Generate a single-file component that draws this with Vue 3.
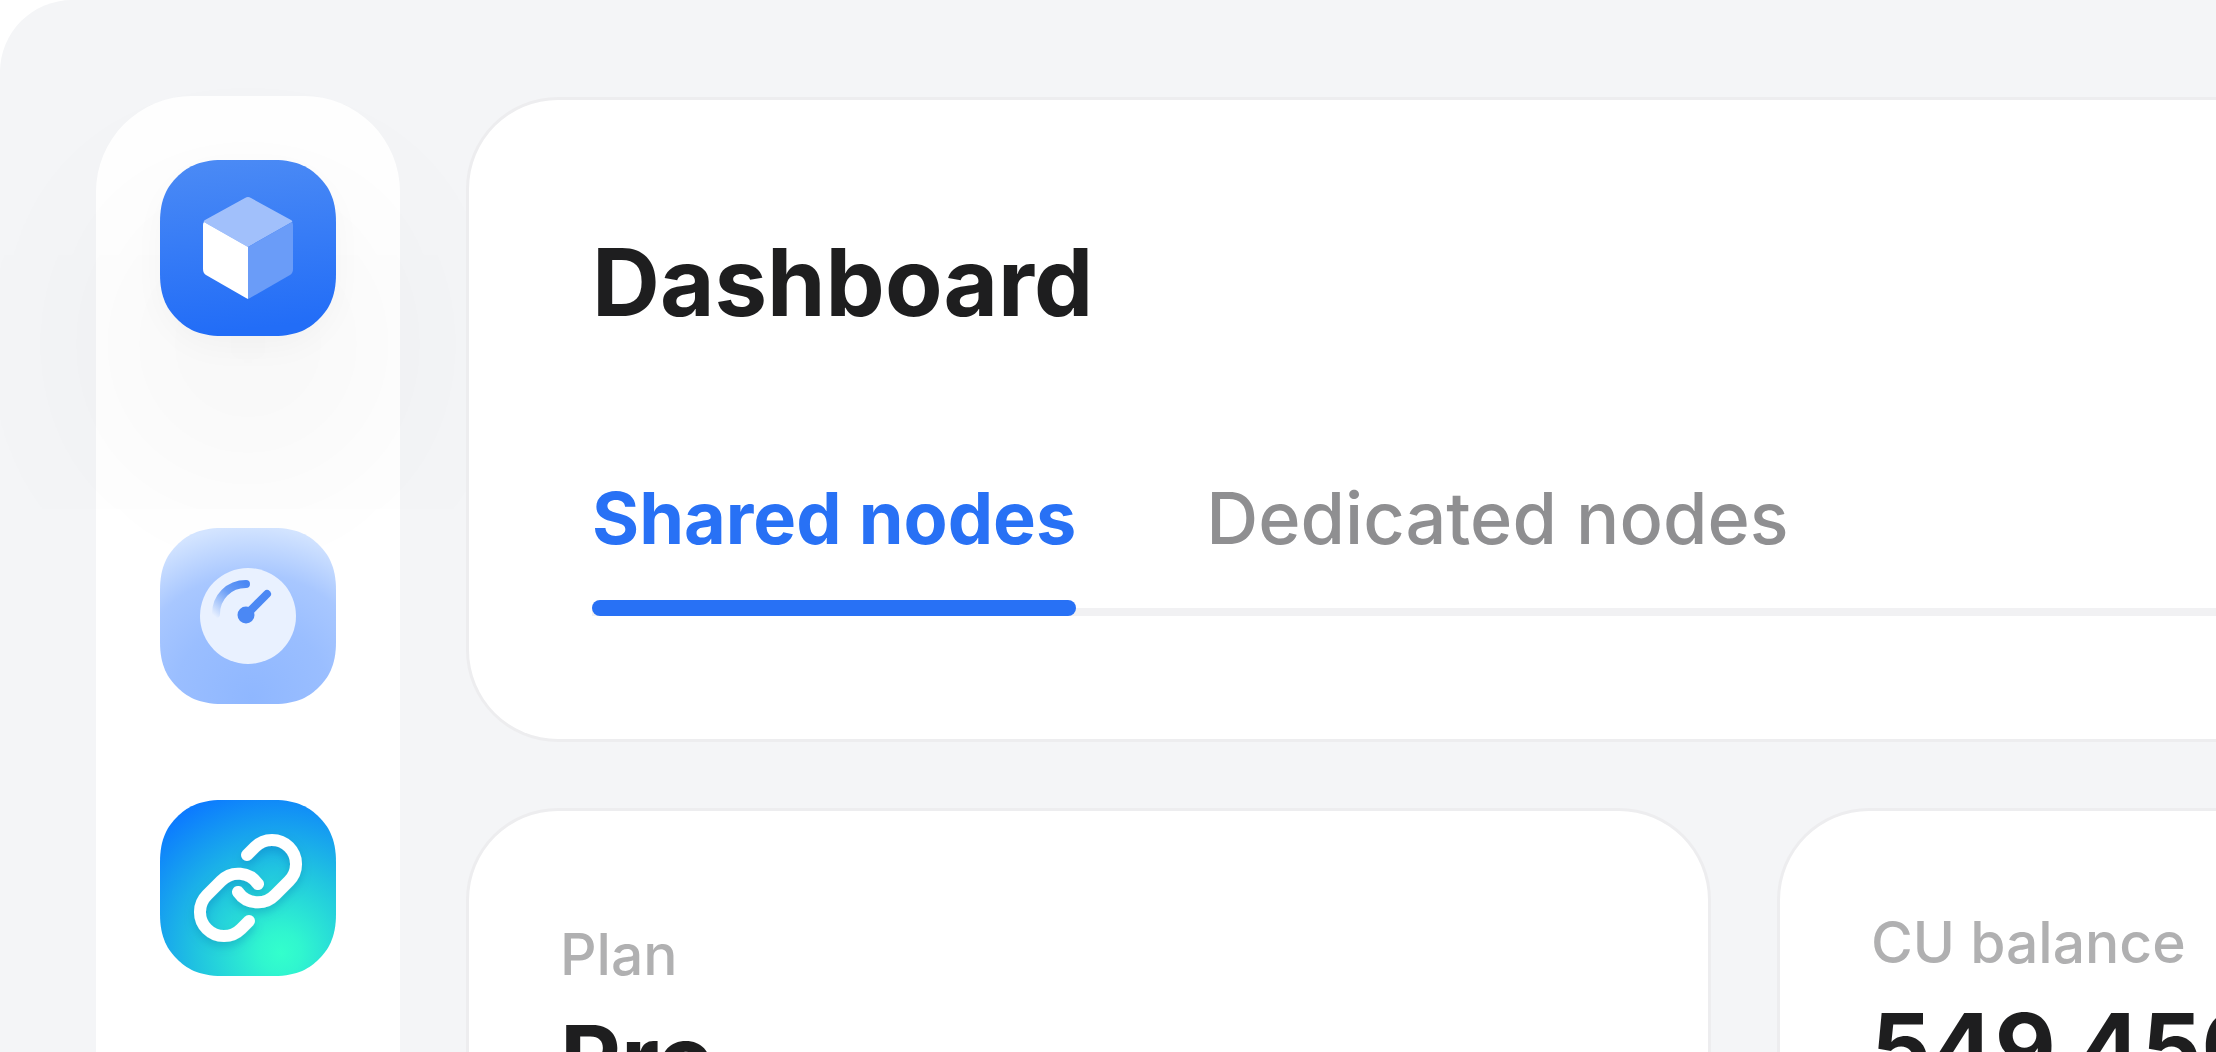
<script setup>
const tile = 'M62 0H114C138 0 150 8 159 17S176 38 176 62V114C176 138 168 150 159 159S138 176 114 176H62C38 176 26 168 17 159S0 138 0 114V62C0 38 8 26 17 17S38 0 62 0Z'
const tabs = [
  { label: 'Shared nodes', active: true },
  { label: 'Dedicated nodes', active: false },
]
const stats = [
  { label: 'Plan', value: 'Pro', kind: 'plan' },
  { label: 'CU balance', value: '549 450', kind: 'balance' },
]
</script>

<template>
  <div class="app">
    <nav class="sidebar" aria-label="Main">
      <a class="logo" href="#" aria-label="Home">
        <svg viewBox="0 0 176 176">
          <defs>
            <linearGradient id="logoFill" x1="0" y1="0" x2="0.1" y2="1">
              <stop offset="0" stop-color="#4c8bf5" />
              <stop offset="1" stop-color="#226df7" />
            </linearGradient>
          </defs>
          <path :d="tile" fill="url(#logoFill)" />
          <path d="M85 38Q88 36 91 38L131 60Q133 61 132 62L88 87 44 62Q43 61 45 60Z" fill="#a1c0fb" />
          <path d="M132 62Q133 63 133 65V109Q133 113 130 115L90 138 88 139V87Z" fill="#6a9cf8" />
          <path d="M44 62L88 87V139L86 138 46 115Q43 113 43 109V65Q43 63 44 62Z" fill="#fff" />
        </svg>
      </a>
      <a href="#" aria-label="Dashboard">
        <svg viewBox="0 0 176 176">
          <defs>
            <radialGradient id="gaugeFill" gradientUnits="userSpaceOnUse" cx="92" cy="170" r="172">
              <stop offset="0" stop-color="#8fb7ff" />
              <stop offset="0.45" stop-color="#9abeff" />
              <stop offset="0.72" stop-color="#a8c7ff" />
              <stop offset="1" stop-color="#d3e4ff" />
            </radialGradient>
            <linearGradient id="gaugeArc" gradientUnits="userSpaceOnUse" x1="84" y1="54" x2="54" y2="88">
              <stop offset="0" stop-color="#4b88f4" />
              <stop offset="0.4" stop-color="#6b9ef6" />
              <stop offset="1" stop-color="#e9f1ff" />
            </linearGradient>
          </defs>
          <path :d="tile" fill="url(#gaugeFill)" />
          <circle cx="88" cy="88" r="48" fill="#e9f1ff" />
          <path d="M56 86C56 69 69 56 86 56" fill="none" stroke="url(#gaugeArc)" stroke-width="8" stroke-linecap="round" />
          <path d="M86 87L107 66" stroke="#4b88f4" stroke-width="8" stroke-linecap="round" />
          <circle cx="86" cy="87" r="8.5" fill="#4b88f4" />
        </svg>
      </a>
      <a href="#" aria-label="Endpoints">
        <svg viewBox="0 0 176 176">
          <defs>
            <radialGradient id="linkFill" gradientUnits="userSpaceOnUse" cx="121" cy="153" r="170">
              <stop offset="0" stop-color="#33ffcc" />
              <stop offset="0.12" stop-color="#30f6cf" />
              <stop offset="0.5" stop-color="#20c4e0" />
              <stop offset="1" stop-color="#0c7bff" />
            </radialGradient>
            <filter id="linkShadow" x="-20%" y="-20%" width="140%" height="150%">
              <feDropShadow dx="0" dy="5" stdDeviation="5" flood-color="#0a6cab" flood-opacity="0.3" />
            </filter>
          </defs>
          <path :d="tile" fill="url(#linkFill)" />
          <g fill="none" stroke="#fff" stroke-width="12" stroke-linecap="round" filter="url(#linkShadow)">
            <path d="M87 55L95 47A24 24 0 0 1 129 81L115 95A24 24 0 0 1 78 92" />
            <path d="M89 121L81 129A24 24 0 0 1 47 95L61 81A24 24 0 0 1 98 84" />
          </g>
        </svg>
      </a>
    </nav>

    <main class="content">
      <header class="card head">
        <h1>Dashboard</h1>
        <div class="tabs" role="tablist">
          <button
            v-for="tab in tabs"
            :key="tab.label"
            class="tab"
            :class="{ active: tab.active }"
            role="tab"
            type="button"
            :aria-selected="tab.active"
          >{{ tab.label }}</button>
        </div>
      </header>
      <section class="stats">
        <article v-for="s in stats" :key="s.label" class="card stat" :class="s.kind">
          <p class="label">{{ s.label }}</p>
          <p class="value">{{ s.value }}</p>
        </article>
      </section>
    </main>
  </div>
</template>

<style>
body {
  background: #fff;
}
</style>

<style scoped>
.app {
  box-sizing: border-box;
  display: flex;
  gap: 66px;
  height: 100vh;
  padding: 96px 0 0 96px;
  overflow: hidden;
  background: #f4f5f7;
  border-radius: 72px 0 0 0;
  font-family: Inter, sans-serif;
  color: #1e1e1f;
}
.sidebar {
  box-sizing: border-box;
  display: flex;
  flex: none;
  flex-direction: column;
  align-items: center;
  gap: 96px;
  width: 304px;
  padding-top: 64px;
  background: #fff;
  border-radius: 96px 96px 0 0;
}
.sidebar a {
  display: block;
  width: 176px;
  height: 176px;
}
.sidebar .logo {
  margin-bottom: 96px;
  border-radius: 64px;
  box-shadow: 0 12px 32px rgba(0, 0, 0, 0.03), 0 96px 240px rgba(0, 0, 0, 0.1);
}
.sidebar svg {
  display: block;
  width: 100%;
  height: 100%;
}
.content {
  position: relative;
  display: flex;
  flex: 1;
  flex-direction: column;
  gap: 66px;
  min-width: 0;
}
.card {
  box-sizing: border-box;
  background: #fff;
  border: 3px solid #ededef;
  border-radius: 92px;
}
.head {
  flex: none;
  margin-top: 1px;
  padding: 122px 0 123px 123px;
  border-right: 0;
  border-radius: 92px 0 0 92px;
}
h1 {
  margin: 0;
  font-size: 94px;
  font-weight: 700;
  line-height: 120px;
}
.tabs {
  display: flex;
  gap: 130px;
  margin-top: 128px;
  box-shadow: inset 0 -8px #f1f1f3;
}
.tab {
  padding: 0 0 50px;
  border: 0;
  background: none;
  font: 500 72px/96px Inter, sans-serif;
  color: #8f8f91;
}
.tab.active {
  position: relative;
  font-weight: 700;
  color: #2871f5;
}
.tab.active::after {
  position: absolute;
  right: 0;
  bottom: 0;
  left: 0;
  height: 16px;
  border-radius: 8px;
  background: #2871f5;
  content: '';
}
.stats {
  display: grid;
  flex: 1;
  grid-template-columns: 1245fr 439fr;
  gap: 66px;
}
.stat {
  min-width: 0;
  padding: 108px 0 0 91px;
  border-bottom: 0;
  border-radius: 92px 92px 0 0;
}
.stat.balance {
  padding-top: 96px;
  border-right: 0;
  border-radius: 92px 0 0 0;
}
.stat p {
  margin: 0;
  white-space: nowrap;
}
.stat .label {
  font-size: 57px;
  font-weight: 500;
  line-height: 72px;
  color: #b0b0b1;
}
.stat .value {
  margin-top: 12px;
  font-size: 94px;
  font-weight: 700;
  line-height: 112px;
}
</style>
